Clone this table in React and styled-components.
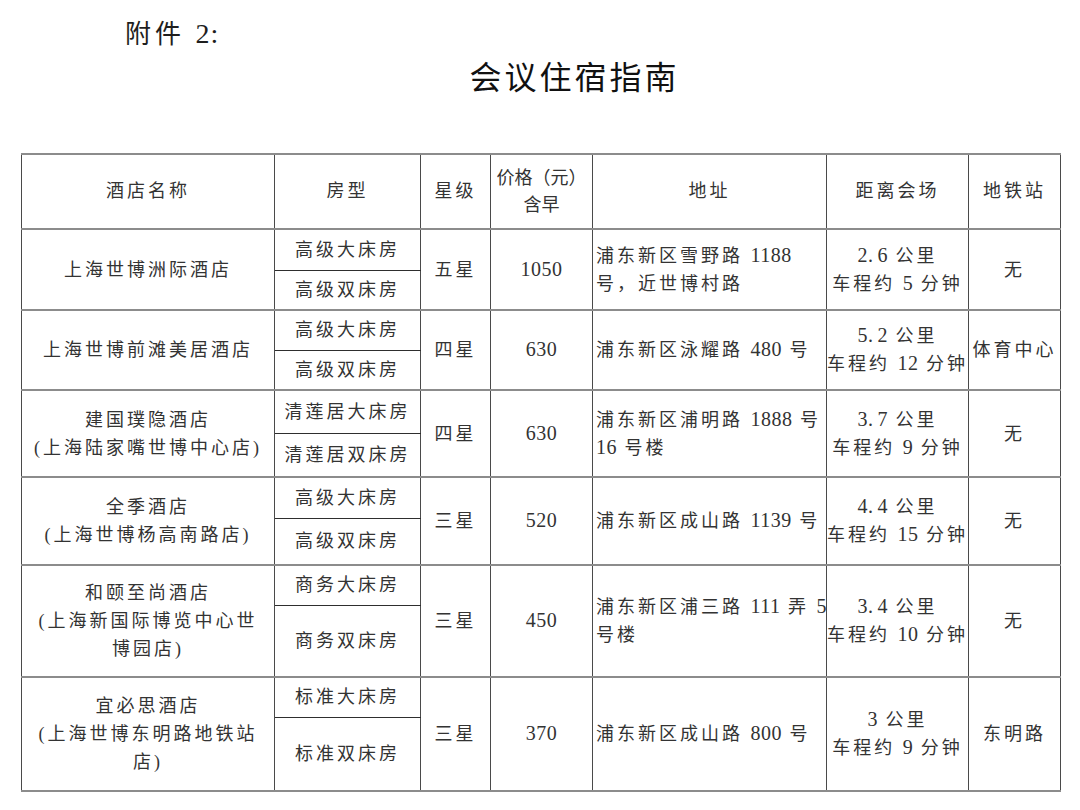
import React from "react";
import styled, { createGlobalStyle } from "styled-components";

const Global = createGlobalStyle`
  html, body { margin: 0; padding: 0; background: #ffffff; }
  body { font-family: "Liberation Serif", "Noto Sans CJK SC", serif; }
`;

const Page = styled.div`
  width: 1080px;
  height: 810px;
  box-sizing: border-box;
  padding: 16px 20px 0 21px;
  background: #fff;
  overflow: hidden;
`;

const Annex = styled.div`
  padding-left: 104px;
  font-size: 26px;
  line-height: 38px;
  height: 38px;
  letter-spacing: 4px;
  color: #1e1e1e;
`;

const AnnexNum = styled.span`
  font-size: 28px;
  line-height: 1;
  letter-spacing: 1px;
`;

const Title = styled.h1`
  margin: 0;
  padding-left: 68px;
  text-align: center;
  font-size: 32px;
  line-height: 48px;
  font-weight: 400;
  letter-spacing: 3px;
  color: #111;
`;

const Table = styled.table`
  margin-top: 51px;
  width: 1039px;
  table-layout: fixed;
  border-collapse: collapse;
  font-size: 18px;
  letter-spacing: 3px;
  color: #333;
`;

const Tr = styled.tr`
  height: ${(p) => p.$h}px;
`;

const Cell = styled.td`
  padding: 0;
  border-left: 1px solid #4a4a4a;
  border-right: 1px solid #4a4a4a;
  border-top: 2px solid #8c8c8c;
  border-bottom: 2px solid #8c8c8c;
  text-align: ${(p) => p.$align || "center"};
  padding-left: ${(p) => (p.$align === "left" ? "3px" : "0")};
  vertical-align: middle;
  line-height: 28px;
  white-space: nowrap;
  overflow: visible;
`;

const HeadCell = styled(Cell).attrs({ as: "th" })`
  font-weight: 400;
  line-height: 26.5px;
  letter-spacing: ${(p) => (p.$tight ? "0px" : "3px")};
`;

const RoomCell = styled(Cell)`
  ${(p) => (p.$first ? "border-bottom: 1px solid #2e2e2e;" : "border-top: 1px solid #2e2e2e;")}
`;

const Num = styled.span`
  font-size: 20px;
  line-height: 1;
  letter-spacing: 0.5px;
`;

const Dot = styled.span`
  margin-right: 4px;
`;

const Text = ({ children }) =>
  String(children)
    .split(/(\d[\d.]*)/)
    .map((part, i) => {
      if (!/^\d/.test(part)) return <React.Fragment key={i}>{part}</React.Fragment>;
      const [a, b] = part.split(".");
      return (
        <Num key={i}>
          {b !== undefined ? (
            <>
              {a}
              <Dot>.</Dot>
              {b}
            </>
          ) : (
            part
          )}
        </Num>
      );
    });

const Lines = ({ lines }) =>
  lines.map((l, i) => (
    <React.Fragment key={i}>
      {i > 0 && <br />}
      <Text>{l}</Text>
    </React.Fragment>
  ));

const widths = [253, 146, 70, 102, 234, 142, 92];

const hotels = [
  {
    name: ["上海世博洲际酒店"],
    rooms: ["高级大床房", "高级双床房"],
    star: "五星",
    price: "1050",
    addr: ["浦东新区雪野路 1188", "号，近世博村路"],
    dist: ["2.6 公里", "车程约 5 分钟"],
    metro: "无",
    h: [41, 40],
  },
  {
    name: ["上海世博前滩美居酒店"],
    rooms: ["高级大床房", "高级双床房"],
    star: "四星",
    price: "630",
    addr: ["浦东新区泳耀路 480 号"],
    dist: ["5.2 公里", "车程约 12 分钟"],
    metro: "体育中心",
    h: [40, 40],
  },
  {
    name: ["建国璞隐酒店", "(上海陆家嘴世博中心店)"],
    rooms: ["清莲居大床房", "清莲居双床房"],
    star: "四星",
    price: "630",
    addr: ["浦东新区浦明路 1888 号", "16 号楼"],
    dist: ["3.7 公里", "车程约 9 分钟"],
    metro: "无",
    h: [43, 44],
  },
  {
    name: ["全季酒店", "(上海世博杨高南路店)"],
    rooms: ["高级大床房", "高级双床房"],
    star: "三星",
    price: "520",
    addr: ["浦东新区成山路 1139 号"],
    dist: ["4.4 公里", "车程约 15 分钟"],
    metro: "无",
    h: [41, 47],
  },
  {
    name: ["和颐至尚酒店", "(上海新国际博览中心世", "博园店)"],
    rooms: ["商务大床房", "商务双床房"],
    star: "三星",
    price: "450",
    addr: ["浦东新区浦三路 111 弄 5", "号楼"],
    dist: ["3.4 公里", "车程约 10 分钟"],
    metro: "无",
    h: [40, 72],
  },
  {
    name: ["宜必思酒店", "(上海世博东明路地铁站", "店)"],
    rooms: ["标准大床房", "标准双床房"],
    star: "三星",
    price: "370",
    addr: ["浦东新区成山路 800 号"],
    dist: ["3 公里", "车程约 9 分钟"],
    metro: "东明路",
    h: [40, 74],
  },
];

export default function App() {
  return (
    <>
      <Global />
      <Page>
        <Annex>
          附件 <AnnexNum>2:</AnnexNum>
        </Annex>
        <Title>会议住宿指南</Title>
        <Table>
          <colgroup>
            {widths.map((w, i) => (
              <col key={i} style={{ width: w }} />
            ))}
          </colgroup>
          <thead>
            <Tr $h={75}>
              <HeadCell>酒店名称</HeadCell>
              <HeadCell>房型</HeadCell>
              <HeadCell>星级</HeadCell>
              <HeadCell $tight>
                价格（元）
                <br />
                含早
              </HeadCell>
              <HeadCell>地址</HeadCell>
              <HeadCell>距离会场</HeadCell>
              <HeadCell>地铁站</HeadCell>
            </Tr>
          </thead>
          <tbody>
            {hotels.map((h, idx) => (
              <React.Fragment key={idx}>
                <Tr $h={h.h[0]}>
                  <Cell rowSpan={2}>
                    <Lines lines={h.name} />
                  </Cell>
                  <RoomCell $first>{h.rooms[0]}</RoomCell>
                  <Cell rowSpan={2}>{h.star}</Cell>
                  <Cell rowSpan={2}>
                    <Text>{h.price}</Text>
                  </Cell>
                  <Cell rowSpan={2} $align="left">
                    <Lines lines={h.addr} />
                  </Cell>
                  <Cell rowSpan={2}>
                    <Lines lines={h.dist} />
                  </Cell>
                  <Cell rowSpan={2}>{h.metro}</Cell>
                </Tr>
                <Tr $h={h.h[1]}>
                  <RoomCell>{h.rooms[1]}</RoomCell>
                </Tr>
              </React.Fragment>
            ))}
          </tbody>
        </Table>
      </Page>
    </>
  );
}
